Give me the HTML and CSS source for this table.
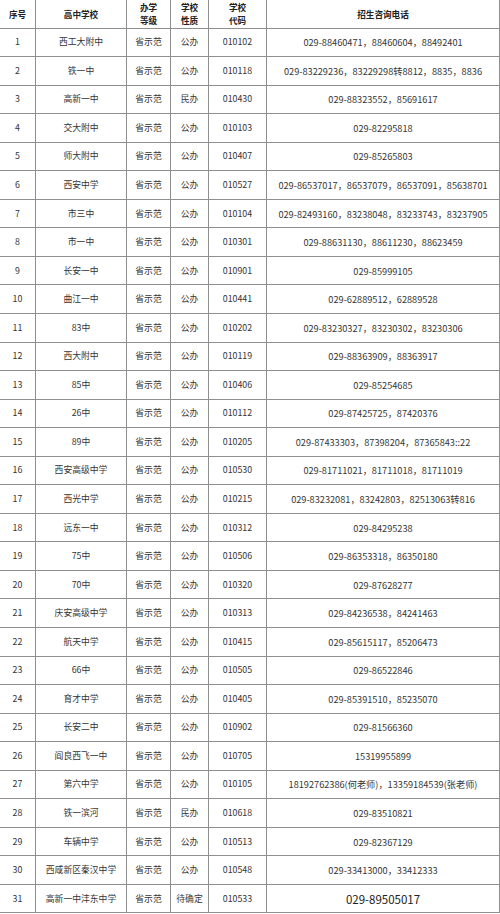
FILE: index.html
```html
<!DOCTYPE html>
<html lang="zh">
<head>
<meta charset="utf-8">
<link rel="stylesheet" href="styles.css">
</head>
<body>
<table class="sheet">
  <colgroup>
    <col class="c-no"><col class="c-name"><col class="c-level"><col class="c-type"><col class="c-code"><col class="c-tel">
  </colgroup>
  <thead>
    <tr><th>序号</th><th>高中学校</th><th><span class="hl">办学</span><span class="hl">等级</span></th><th><span class="hl">学校</span><span class="hl">性质</span></th><th><span class="hl">学校</span><span class="hl">代码</span></th><th>招生咨询电话</th></tr>
  </thead>
  <tbody>
    <tr><td>1</td><td>西工大附中</td><td>省示范</td><td>公办</td><td>010102</td><td class="tel">029-88460471，88460604，88492401</td></tr>
    <tr><td>2</td><td>铁一中</td><td>省示范</td><td>公办</td><td>010118</td><td class="tel">029-83229236，83229298转8812，8835，8836</td></tr>
    <tr><td>3</td><td>高新一中</td><td>省示范</td><td>民办</td><td>010430</td><td class="tel">029-88323552，85691617</td></tr>
    <tr><td>4</td><td>交大附中</td><td>省示范</td><td>公办</td><td>010103</td><td class="tel">029-82295818</td></tr>
    <tr><td>5</td><td>师大附中</td><td>省示范</td><td>公办</td><td>010407</td><td class="tel">029-85265803</td></tr>
    <tr><td>6</td><td>西安中学</td><td>省示范</td><td>公办</td><td>010527</td><td class="tel">029-86537017，86537079，86537091，85638701</td></tr>
    <tr><td>7</td><td>市三中</td><td>省示范</td><td>公办</td><td>010104</td><td class="tel">029-82493160，83238048，83233743，83237905</td></tr>
    <tr><td>8</td><td>市一中</td><td>省示范</td><td>公办</td><td>010301</td><td class="tel">029-88631130，88611230，88623459</td></tr>
    <tr><td>9</td><td>长安一中</td><td>省示范</td><td>公办</td><td>010901</td><td class="tel">029-85999105</td></tr>
    <tr><td>10</td><td>曲江一中</td><td>省示范</td><td>公办</td><td>010441</td><td class="tel">029-62889512，62889528</td></tr>
    <tr><td>11</td><td>83中</td><td>省示范</td><td>公办</td><td>010202</td><td class="tel">029-83230327，83230302，83230306</td></tr>
    <tr><td>12</td><td>西大附中</td><td>省示范</td><td>公办</td><td>010119</td><td class="tel">029-88363909，88363917</td></tr>
    <tr><td>13</td><td>85中</td><td>省示范</td><td>公办</td><td>010406</td><td class="tel">029-85254685</td></tr>
    <tr><td>14</td><td>26中</td><td>省示范</td><td>公办</td><td>010112</td><td class="tel">029-87425725，87420376</td></tr>
    <tr><td>15</td><td>89中</td><td>省示范</td><td>公办</td><td>010205</td><td class="tel">029-87433303，87398204，87365843::22</td></tr>
    <tr><td>16</td><td>西安高级中学</td><td>省示范</td><td>公办</td><td>010530</td><td class="tel">029-81711021，81711018，81711019</td></tr>
    <tr><td>17</td><td>西光中学</td><td>省示范</td><td>公办</td><td>010215</td><td class="tel">029-83232081，83242803，82513063转816</td></tr>
    <tr><td>18</td><td>远东一中</td><td>省示范</td><td>公办</td><td>010312</td><td class="tel">029-84295238</td></tr>
    <tr><td>19</td><td>75中</td><td>省示范</td><td>公办</td><td>010506</td><td class="tel">029-86353318，86350180</td></tr>
    <tr><td>20</td><td>70中</td><td>省示范</td><td>公办</td><td>010320</td><td class="tel">029-87628277</td></tr>
    <tr><td>21</td><td>庆安高级中学</td><td>省示范</td><td>公办</td><td>010313</td><td class="tel">029-84236538，84241463</td></tr>
    <tr><td>22</td><td>航天中学</td><td>省示范</td><td>公办</td><td>010415</td><td class="tel">029-85615117，85206473</td></tr>
    <tr><td>23</td><td>66中</td><td>省示范</td><td>公办</td><td>010505</td><td class="tel">029-86522846</td></tr>
    <tr><td>24</td><td>育才中学</td><td>省示范</td><td>公办</td><td>010405</td><td class="tel">029-85391510，85235070</td></tr>
    <tr><td>25</td><td>长安二中</td><td>省示范</td><td>公办</td><td>010902</td><td class="tel">029-81566360</td></tr>
    <tr><td>26</td><td>阎良西飞一中</td><td>省示范</td><td>公办</td><td>010705</td><td class="tel">15319955899</td></tr>
    <tr><td>27</td><td>第六中学</td><td>省示范</td><td>公办</td><td>010105</td><td class="tel">18192762386(何老师)，13359184539(张老师)</td></tr>
    <tr><td>28</td><td>铁一滨河</td><td>省示范</td><td>民办</td><td>010618</td><td class="tel">029-83510821</td></tr>
    <tr><td>29</td><td>车辆中学</td><td>省示范</td><td>公办</td><td>010513</td><td class="tel">029-82367129</td></tr>
    <tr><td>30</td><td>西咸新区秦汉中学</td><td>省示范</td><td>公办</td><td>010548</td><td class="tel">029-33413000，33412333</td></tr>
    <tr><td>31</td><td>高新一中沣东中学</td><td>省示范</td><td>待确定</td><td>010533</td><td class="tel tel-big">029-89505017</td></tr>
  </tbody>
</table>
</body>
</html>
```

FILE: styles.css
```css
html, body {
  margin: 0;
  padding: 0;
  background: #ffffff;
}
body {
  width: 500px;
  height: 914px;
  overflow: hidden;
  font-family: "Noto Sans CJK SC", "Noto Sans", sans-serif;
  color: #353535;
}
.sheet {
  border-collapse: collapse;
  table-layout: fixed;
  width: 500px;
  margin-left: -1px;
}
.c-no { width: 36px; }
.c-name { width: 91px; }
.c-level { width: 44px; }
.c-type { width: 38px; }
.c-code { width: 58px; }
.c-tel { width: 233px; }
.sheet th, .sheet td {
  border: 1px solid #8f8f8f;
  text-align: center;
  vertical-align: middle;
  padding: 0;
  font-size: 8.8px;
  line-height: 12px;
  white-space: nowrap;
  overflow: hidden;
}
.sheet thead tr { height: 28px; }
.sheet thead th {
  border-top: none;
  font-weight: bold;
  color: #222222;
  font-size: 8.6px;
}
.hl {
  display: block;
  line-height: 13px;
}
.sheet tbody tr { height: 28.55px; }
.sheet .tel {
  font-size: 9.2px;
}
.sheet .tel-big {
  font-size: 11.5px;
  color: #222222;
}
```
